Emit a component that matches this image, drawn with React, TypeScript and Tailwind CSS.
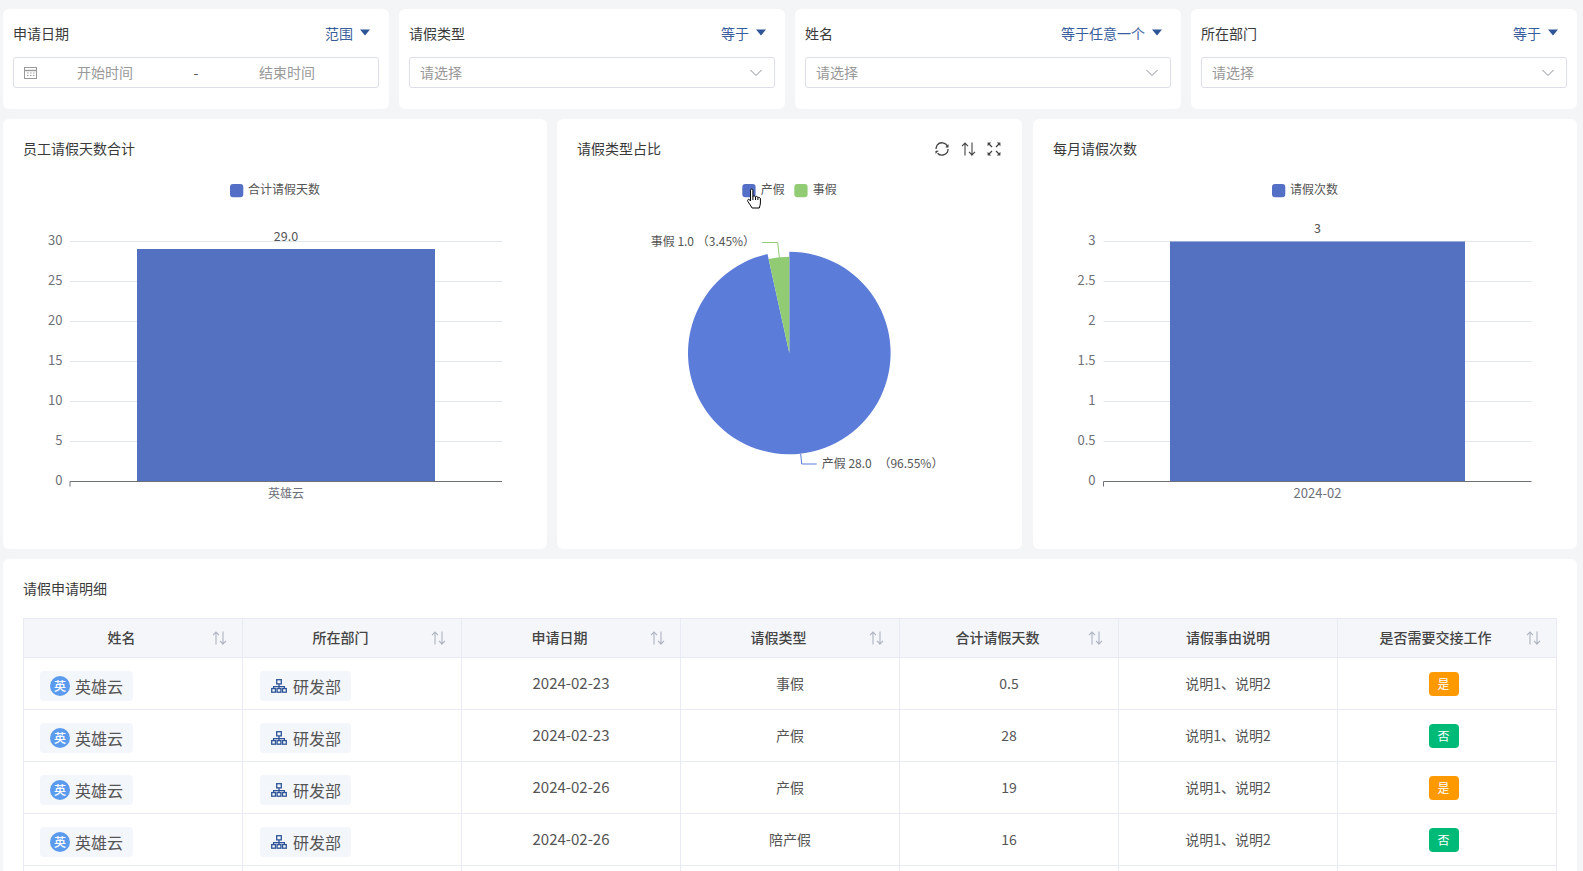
import React from "react";

const Tri = () => (
  <svg width="10" height="7" viewBox="0 0 10 7" className="ml-[7px]"><path d="M0 0.5h10L5 6.5z" fill="#2e5597" /></svg>
);

const Chevron = () => (
  <svg width="14" height="8" viewBox="0 0 14 8" fill="none" stroke="#8a8f99" strokeWidth="1"><path d="M1.5 1l5.5 5.5L12.5 1" /></svg>
);

const SortIcon = ({ color = "#aeb4bf" }: { color?: string }) => (
  <svg width="15" height="14" viewBox="0 0 15 14" fill="none" stroke={color} strokeWidth="1.1">
    <path d="M4 13.5V1M1 4.2L4 1l3 3.2" />
    <path d="M11 .5V13l3-3.2M11 13L8 9.8" />
  </svg>
);

const Dept = () => (
  <svg width="16" height="14" viewBox="0 0 16 14" fill="none" stroke="#2e5597" strokeWidth="1.3">
    <rect x="5.7" y="0.7" width="4.6" height="4.2" />
    <path d="M8 5v3M2.6 9.6V7.6h10.8v2M8 7.6v2" />
    <rect x="0.7" y="9.6" width="3.8" height="3.6" />
    <rect x="6.1" y="9.6" width="3.8" height="3.6" />
    <rect x="11.5" y="9.6" width="3.8" height="3.6" />
  </svg>
);

const Filter = ({ label, op, date }: { label: string; op: string; date?: boolean }) => (
  <div className="flex-1 h-[100px] bg-white rounded-[6px] px-[10px] pt-[14px]">
    <div className="flex items-center justify-between h-5 pr-[9px] text-[14px] leading-5">
      <span className="text-[#3a3a3a]">{label}</span>
      <span className="flex items-center text-[#3a5e9c] -mt-px">{op}<Tri /></span>
    </div>
    <div className="mt-[14px] h-[31px] border border-[#dcdfe8] rounded-[3px] flex items-center text-[14px] text-[#999]">
      {date ? (
        <>
          <svg width="13" height="12" viewBox="0 0 13 12" fill="none" stroke="#999" className="ml-[10px] shrink-0">
            <rect x="0.5" y="0.5" width="12" height="11" />
            <path d="M0.5 3.5h12" strokeWidth="1.4" />
            <path d="M3 6h1.5M6 6h1.5M9 6h1.5M3 8.5h1.5M6 8.5h1.5M9 8.5h1.5" />
          </svg>
          <span className="w-[136px] text-center">开始时间</span>
          <span className="w-[46px] text-center text-[#555]">-</span>
          <span className="w-[136px] text-center">结束时间</span>
        </>
      ) : (
        <div className="flex-1 flex items-center justify-between pl-[10px] pr-[11px]">
          <span>请选择</span>
          <Chevron />
        </div>
      )}
    </div>
  </div>
);

const Title = ({ children, icons }: { children: React.ReactNode; icons?: boolean }) => (
  <div className="flex items-center justify-between h-5 text-[14px] leading-5 text-[#3a3a3a]">
    <span className="-mt-[2px]">{children}</span>
    {icons && (
      <div className="flex items-center gap-[12px] mr-px">
        <svg width="14" height="14" viewBox="0 0 14 14" fill="none" stroke="#444" strokeWidth="1.3">
          <path d="M2.2 3A6.2 6.2 0 0 1 12.6 4.4M13 7A6 6 0 0 1 2.6 11.2M1 7c0-1.2.3-2.2 1.2-4" />
          <path d="M13.2 2.5v2.7h-2.6M.8 11.6V9h2.6" fill="#444" strokeWidth="0.6" />
        </svg>
        <SortIcon color="#444" />
        <svg width="14" height="14" viewBox="0 0 14 14" fill="none" stroke="#444" strokeWidth="1.3" className="-ml-px">
          <path d="M5 5L1.5 1.5M9 5l3.5-3.5M5 9l-3.5 3.5M9 9l3.5 3.5" />
          <path d="M.6.6h3.6L.6 4.2zM13.4.6H9.8l3.6 3.6zM.6 13.4h3.6L.6 9.8zM13.4 13.4H9.8l3.6-3.6z" fill="#444" stroke="none" />
        </svg>
      </div>
    )}
  </div>
);

const GRID = [241.5, 281.5, 321.5, 361.5, 401.5, 441.5, 481.5];

const BarChart = ({
  vb, legend, legendX, x0, x1, barX, barW, barTop, ticks, labelX, value, valueY, cat, catSize,
}: {
  vb: string; legend: string; legendX: number; x0: number; x1: number; barX: number; barW: number;
  barTop: number; ticks: string[]; labelX: number; value: string; valueY: number; cat: string; catSize: number;
}) => (
  <svg viewBox={vb} className="block w-full h-[380px] text-[12px]">
    <rect x={legendX} y={184} width={13.3} height={13.3} rx={3} fill="#5470c6" />
    <text x={legendX + 18} y={194} fill="#555">{legend}</text>
    {GRID.slice(0, 6).map((y) => (
      <line key={y} x1={x0} x2={x1} y1={y} y2={y} stroke="#e0e6f1" />
    ))}
    <rect x={barX} y={barTop} width={barW} height={481.5 - barTop} fill="#5470c0" />
    <line x1={x0} x2={x1} y1={481.5} y2={481.5} stroke="#6e7079" />
    <line x1={x0} x2={x0} y1={481.5} y2={486.5} stroke="#6e7079" />
    {ticks.map((t, i) => (
      <text key={t} x={labelX} y={GRID[i] + 3} textAnchor="end" fill="#6e7079" fontSize={13}>{t}</text>
    ))}
    <text x={barX + barW / 2} y={valueY} textAnchor="middle" fill="#555" fontSize={12.5}>{value}</text>
    <text x={barX + barW / 2} y={498} textAnchor="middle" fill="#6e7079" fontSize={catSize}>{cat}</text>
  </svg>
);

const PieChart = () => {
  const cx = 789.3, cy = 353;
  const a = (3.45 / 100) * 2 * Math.PI;
  const s = Math.sin(a), c = Math.cos(a);
  const R = 101.3, r = 96.3;
  return (
    <svg viewBox="557 169 465 380" className="block w-full h-[380px] text-[12px]">
      <rect x={742.3} y={184} width={13.3} height={13.3} rx={3} fill="#5470c6" />
      <text x={760.7} y={194} fill="#555">产假</text>
      <rect x={794.3} y={184} width={13.3} height={13.3} rx={3} fill="#91cc75" />
      <text x={812.7} y={194} fill="#555">事假</text>
      <path d={`M${cx} ${cy}V${cy - R}A${R} ${R} 0 1 1 ${cx - R * s} ${cy - R * c}Z`} fill="#5c7cd9" />
      <path d={`M${cx} ${cy}L${cx - r * s} ${cy - r * c}A${r} ${r} 0 0 1 ${cx} ${cy - r}Z`} fill="#91cc75" />
      <path d="M762 242.5H777.7L779.3 257" fill="none" stroke="#91cc75" />
      <path d="M800.7 454L801.7 464H816.7" fill="none" stroke="#5c7cd9" />
      <text x={650.7} y={246} fill="#555">事假 1.0 （3.45%）</text>
      <text x={821.7} y={468} fill="#555">产假 28.0 <tspan dx={4}>（96.55%）</tspan></text>
      <g transform="translate(746.5 188)" fill="#fff" stroke="#000" strokeWidth="1" strokeLinejoin="round">
        <path d="M4 2.2C4 .7 6.4 .7 6.4 2.2V8.6C6.8 7.6 8.7 7.7 9 8.9 9.4 8 11.2 8.2 11.4 9.7 12 9 13.9 9.3 13.9 10.9V15C13.9 17 13.2 18 12.8 20H5.6C4.6 18 3 16 1.4 13.6.4 12 2 10.6 3 11.7L4 13Z" />
        <path d="M6.4 8.6V12M9 8.9V12M11.4 9.7V12" fill="none" />
      </g>
    </svg>
  );
};

const ROWS = [
  ["2024-02-23", "事假", "0.5", "是"],
  ["2024-02-23", "产假", "28", "否"],
  ["2024-02-26", "产假", "19", "是"],
  ["2024-02-26", "陪产假", "16", "否"],
];

const HEAD: [string, boolean][] = [
  ["姓名", true], ["所在部门", true], ["申请日期", true], ["请假类型", true],
  ["合计请假天数", true], ["请假事由说明", false], ["是否需要交接工作", true],
];

const cell = "border-r border-b border-[#e8ebf3]";

export default function App() {
  return (
    <div className="h-[871px] overflow-hidden bg-[#f4f5f7] pt-[9px] pl-[3px] pr-[6px] flex flex-col gap-[10px] font-['Noto_Sans_CJK_SC','Liberation_Sans',sans-serif]">
      <div className="flex gap-[10px] shrink-0">
        <Filter label="申请日期" op="范围" date />
        <Filter label="请假类型" op="等于" />
        <Filter label="姓名" op="等于任意一个" />
        <Filter label="所在部门" op="等于" />
      </div>

      <div className="flex gap-[10px] h-[430px] shrink-0">
        <div className="w-[544px] bg-white rounded-[6px]">
          <div className="px-5 pt-5 pb-[10px]"><Title>员工请假天数合计</Title></div>
          <BarChart vb="3 169 544 380" legend="合计请假天数" legendX={230} x0={70} x1={502} barX={137} barW={298}
            barTop={249} ticks={["30", "25", "20", "15", "10", "5", "0"]} labelX={62.5} value="29.0" valueY={241} cat="英雄云" catSize={12} />
        </div>
        <div className="w-[465px] bg-white rounded-[6px]">
          <div className="px-5 pt-5 pb-[10px]"><Title icons>请假类型占比</Title></div>
          <PieChart />
        </div>
        <div className="flex-1 ml-px bg-white rounded-[6px]">
          <div className="px-5 pt-5 pb-[10px]"><Title>每月请假次数</Title></div>
          <BarChart vb="1033 169 544 380" legend="请假次数" legendX={1272} x0={1103.5} x1={1531.5} barX={1170} barW={295}
            barTop={241.5} ticks={["3", "2.5", "2", "1.5", "1", "0.5", "0"]} labelX={1095.5} value="3" valueY={233} cat="2024-02" catSize={13} />
        </div>
      </div>

      <div className="flex-1 bg-white rounded-t-[6px] px-5 pt-5">
        <div className="h-5 mb-[19px] text-[14px] leading-5 text-[#3a3a3a] -translate-y-px">请假申请明细</div>
        <div className="border-l border-t border-[#e8ebf3] text-[14px]">
          <div className="grid grid-cols-7 h-[39px] bg-[#f4f6fa]">
            {HEAD.map(([h, sort]) => (
              <div key={h} className={`${cell} flex items-center px-[15px] font-medium text-[#444]`}>
                <span className={`flex-1 text-center -mt-[2px] ${sort ? "pr-[8px]" : ""}`}>{h}</span>
                {sort && <SortIcon />}
              </div>
            ))}
          </div>
          {[...ROWS, ["", "", "", ""]].map((r, i) => (
            <div key={i} className="grid grid-cols-7 h-[52px] text-[#555]">
              {r[0] ? (
                <>
                  <div className={`${cell} pt-[13px] pl-[16px]`}>
                    <div className="inline-flex items-center h-[30px] px-[10px] gap-[5px] bg-[#f3f6fb] rounded-[4px] text-[16px]">
                      <span className="w-5 h-5 rounded-full bg-[#5b9bee] text-white text-[12px] font-medium flex items-center justify-center">英</span>
                      英雄云
                    </div>
                  </div>
                  <div className={`${cell} pt-[13px] pl-[17px]`}>
                    <div className="inline-flex items-center h-[30px] pl-[11px] pr-[10px] gap-[6px] bg-[#f3f6fb] rounded-[4px] text-[16px]">
                      <Dept />
                      研发部
                    </div>
                  </div>
                  <div className={`${cell} flex items-center justify-center text-[15px]`}>{r[0]}</div>
                  <div className={`${cell} flex items-center justify-center`}>{r[1]}</div>
                  <div className={`${cell} flex items-center justify-center`}>{r[2]}</div>
                  <div className={`${cell} flex items-center justify-center`}>说明1、说明2</div>
                  <div className={`${cell} flex items-center justify-center pr-[7px]`}>
                    <span className={`w-[30px] h-6 rounded-[4px] text-white text-[12px] flex items-center justify-center ${r[3] === "是" ? "bg-[#ff9900]" : "bg-[#00bb77]"}`}>{r[3]}</span>
                  </div>
                </>
              ) : (
                Array.from({ length: 7 }, (_, k) => <div key={k} className={cell} />)
              )}
            </div>
          ))}
        </div>
      </div>
    </div>
  );
}
